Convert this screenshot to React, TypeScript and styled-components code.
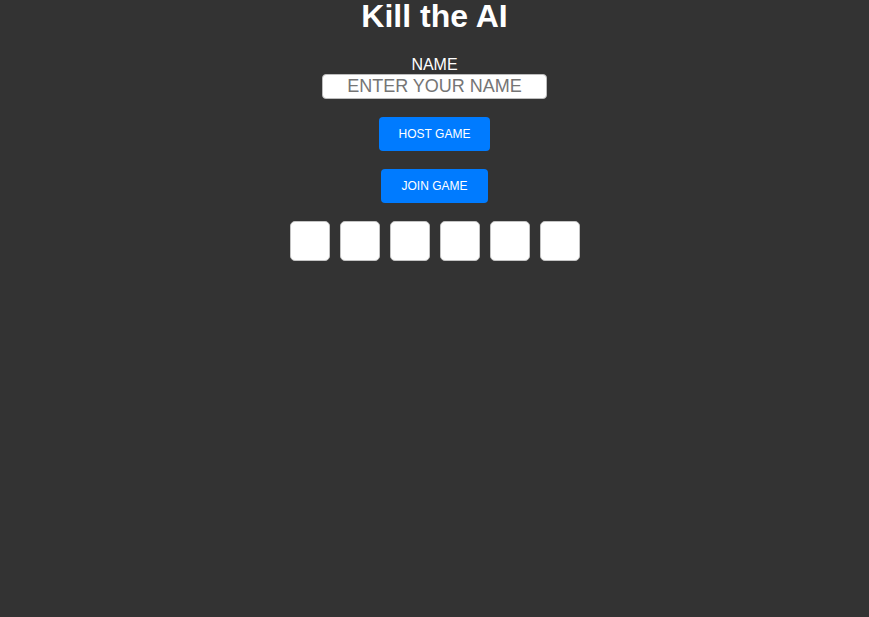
import styled, { createGlobalStyle } from 'styled-components';

const GlobalStyle = createGlobalStyle`
  html, body {
    margin: 0;
    padding: 0;
    background: #333333;
    font-family: "Liberation Sans", Arial, sans-serif;
  }
`;

const Page = styled.div`
  min-height: 617px;
  display: flex;
  flex-direction: column;
  align-items: center;
  color: #ffffff;
`;

const Title = styled.h1`
  margin: 0;
  font-size: 32px;
  line-height: 32px;
  font-weight: 700;
`;

const NameField = styled.div`
  display: flex;
  flex-direction: column;
  align-items: center;
  margin-top: 24px;
`;

const Label = styled.label`
  font-size: 16px;
  line-height: 18.4px;
  text-transform: uppercase;
`;

const NameInput = styled.input`
  box-sizing: border-box;
  width: 225px;
  height: 25px;
  padding: 0 4px;
  border: 1px solid #bdbdbd;
  border-radius: 4px;
  background: #ffffff;
  font-family: "Liberation Sans", Arial, sans-serif;
  font-size: 18px;
  text-align: center;
  outline: none;

  &::placeholder {
    color: #757575;
  }
`;

const Actions = styled.div`
  display: flex;
  flex-direction: column;
  align-items: center;
  gap: 18px;
  margin-top: 18px;
`;

const Button = styled.button`
  padding: 10px 20px;
  border: none;
  border-radius: 4px;
  background: #007bff;
  color: #ffffff;
  font-family: "Liberation Sans", Arial, sans-serif;
  font-size: 12px;
  line-height: 14px;
  cursor: pointer;
`;

const CodeRow = styled.div`
  display: flex;
  gap: 10px;
  margin-top: 18px;
`;

const CodeBox = styled.input`
  box-sizing: border-box;
  width: 40px;
  height: 40px;
  padding: 0;
  border: 1px solid #c4c4c4;
  border-radius: 5px;
  background: #ffffff;
  font-family: "Liberation Sans", Arial, sans-serif;
  font-size: 20px;
  text-align: center;
  text-transform: uppercase;
  outline: none;
`;

const codeSlots = [0, 1, 2, 3, 4, 5];

export default function App() {
  return (
    <>
      <GlobalStyle />
      <Page>
        <Title>Kill the AI</Title>
        <NameField>
          <Label htmlFor="player-name">Name</Label>
          <NameInput id="player-name" placeholder="ENTER YOUR NAME" />
        </NameField>
        <Actions>
          <Button>HOST GAME</Button>
          <Button>JOIN GAME</Button>
        </Actions>
        <CodeRow>
          {codeSlots.map((slot) => (
            <CodeBox key={slot} maxLength={1} aria-label={`Code ${slot + 1}`} />
          ))}
        </CodeRow>
      </Page>
    </>
  );
}
